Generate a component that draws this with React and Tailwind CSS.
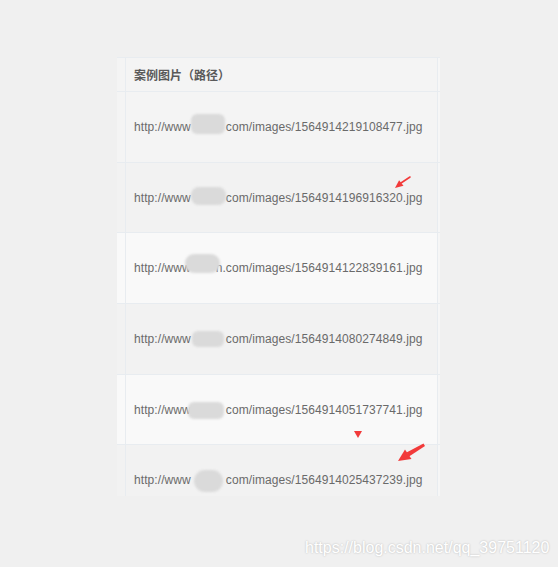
import React from "react";

const rows = [
  { id: "1564914219108477", h: "h-[71px]", bg: "bg-[#f4f4f4]", blob: "left-[65px] top-[22px] w-[34px] h-[20px] rounded-[6px]", tail: "" },
  { id: "1564914196916320", h: "h-[70px]", bg: "bg-[#f2f2f2]", blob: "left-[65px] top-[24px] w-[35px] h-[18px] rounded-[8px]", tail: "" },
  { id: "1564914122839161", h: "h-[71px]", bg: "bg-[#f9f9f9]", blob: "left-[59px] top-[21px] w-[35px] h-[19px] rounded-[9px]", tail: "n." },
  { id: "1564914080274849", h: "h-[71px]", bg: "bg-[#f2f2f2]", blob: "left-[66px] top-[27px] w-[32px] h-[16px] rounded-[6px]", tail: "" },
  { id: "1564914051737741", h: "h-[70px]", bg: "bg-[#f9f9f9]", blob: "left-[62px] top-[27px] w-[36px] h-[17px] rounded-[6px]", tail: "" },
  { id: "1564914025437239", h: "h-[71px]", bg: "bg-[#f2f2f2]", blob: "left-[68px] top-[25px] w-[29px] h-[22px] rounded-full", tail: "" },
];

export default function App() {
  return (
    <div className="relative w-[558px] h-[567px] overflow-hidden bg-[#f0f0f0] pt-[57px] pl-[117px] font-['Liberation_Sans','Noto_Sans_CJK_SC',sans-serif]">
      <div className="w-[323px] h-[439px] overflow-hidden">
        <div className="flex h-[35px] border-y border-[#e8ecf0] bg-[#f4f4f4]">
          <div className="w-[9px] border-r border-[#e8ecf0]" />
          <div className="flex flex-1 items-center pl-[8px] text-[12px] font-bold text-[#5a5a5a] font-['Noto_Sans_CJK_SC',sans-serif]">
            案例图片（路径）
          </div>
          <div className="w-[3px] border-l border-[#e8ecf0] bg-[#f6f6f6]" />
        </div>
        {rows.map((r) => (
          <div key={r.id} className={`flex border-b border-[#e8ecf0] ${r.h} ${r.bg}`}>
            <div className="w-[9px] border-r border-[#e8ecf0]" />
            <div className="relative flex flex-1 items-center pl-[8px] text-[12px] tracking-[0.08px] text-[#6a6a6a] whitespace-nowrap">
              <span>
                http://www
                <span className="inline-block w-[35px] text-right">{r.tail}</span>
                com/images/{r.id}.jpg
              </span>
              <span className={`absolute bg-[#dadada] blur-[1px] ${r.blob}`} />
            </div>
            <div className="w-[3px] border-l border-[#e8ecf0] bg-[#f6f6f6]" />
          </div>
        ))}
      </div>

      <svg className="pointer-events-none absolute left-0 top-0" width="558" height="567" viewBox="0 0 558 567">
        <line x1="410" y1="177" x2="401" y2="183" stroke="#f23a3a" strokeWidth="1.6" strokeLinecap="round" />
        <polygon points="395,188 403.5,185.8 399.1,180.2" fill="#f23a3a" />
        <polygon points="354,431 362,431 358,438" fill="#f23a3a" />
        <polygon points="423.5,443.5 425,446 409,456.5 406.5,452.5" fill="#f23a3a" />
        <polygon points="398,461 411.5,459 405,449.5" fill="#f23a3a" />
      </svg>

      <div className="absolute left-[305px] top-[538px] text-[16px] leading-[20px] text-white [text-shadow:0_0_2px_rgba(0,0,0,0.25)] font-['Liberation_Sans',sans-serif]">
        https://blog.csdn.net/qq_39751120
      </div>
    </div>
  );
}
